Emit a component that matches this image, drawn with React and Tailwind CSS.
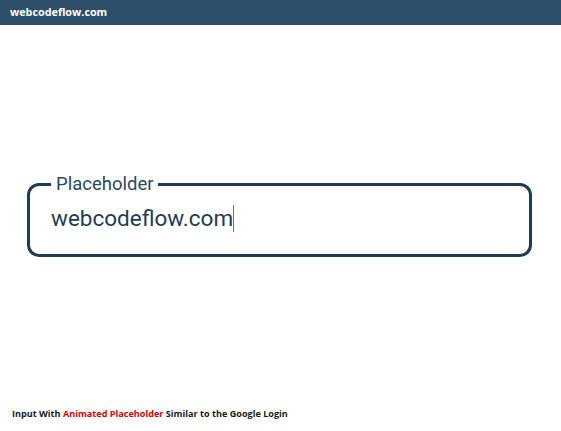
import React from 'react';

const App = () => {
  return (
    <div className="w-[561px] h-[431px] bg-white flex flex-col font-['Roboto',sans-serif]">
      {/* Top bar */}
      <div className="h-[25px] bg-[#2d4f69] flex items-center px-[10px]">
        <span className="text-white text-[10.8px] font-bold font-['Open_Sans',sans-serif]">
          webcodeflow.com
        </span>
      </div>

      {/* Input */}
      <div className="flex-1 flex flex-col justify-center">
        <div className="relative mx-[27px] mt-[7px]">
          <div className="w-[505px] h-[74px] border-[3px] border-[#1f3d57] rounded-[12px] pl-[21px] pt-[17px] flex items-start bg-white">
            <span className="text-[22.5px] leading-[30px] text-[#1f3d57]">webcodeflow.com</span>
            <span className="w-px h-[27px] mt-[2px] bg-[#5a7890]" />
          </div>
          <label className="absolute left-[24px] top-[-10px] px-[5px] bg-white text-[18.5px] leading-[22px] text-[#2a4a63]">
            Placeholder
          </label>
        </div>
      </div>

      {/* Footer caption */}
      <div className="px-[12px] pb-[10px] text-[9.1px] font-bold text-[#1a1a1a] font-['Open_Sans',sans-serif]">
        Input With <span className="text-[#e00000]">Animated Placeholder</span> Similar to the Google Login
      </div>
    </div>
  );
};

export default App;
